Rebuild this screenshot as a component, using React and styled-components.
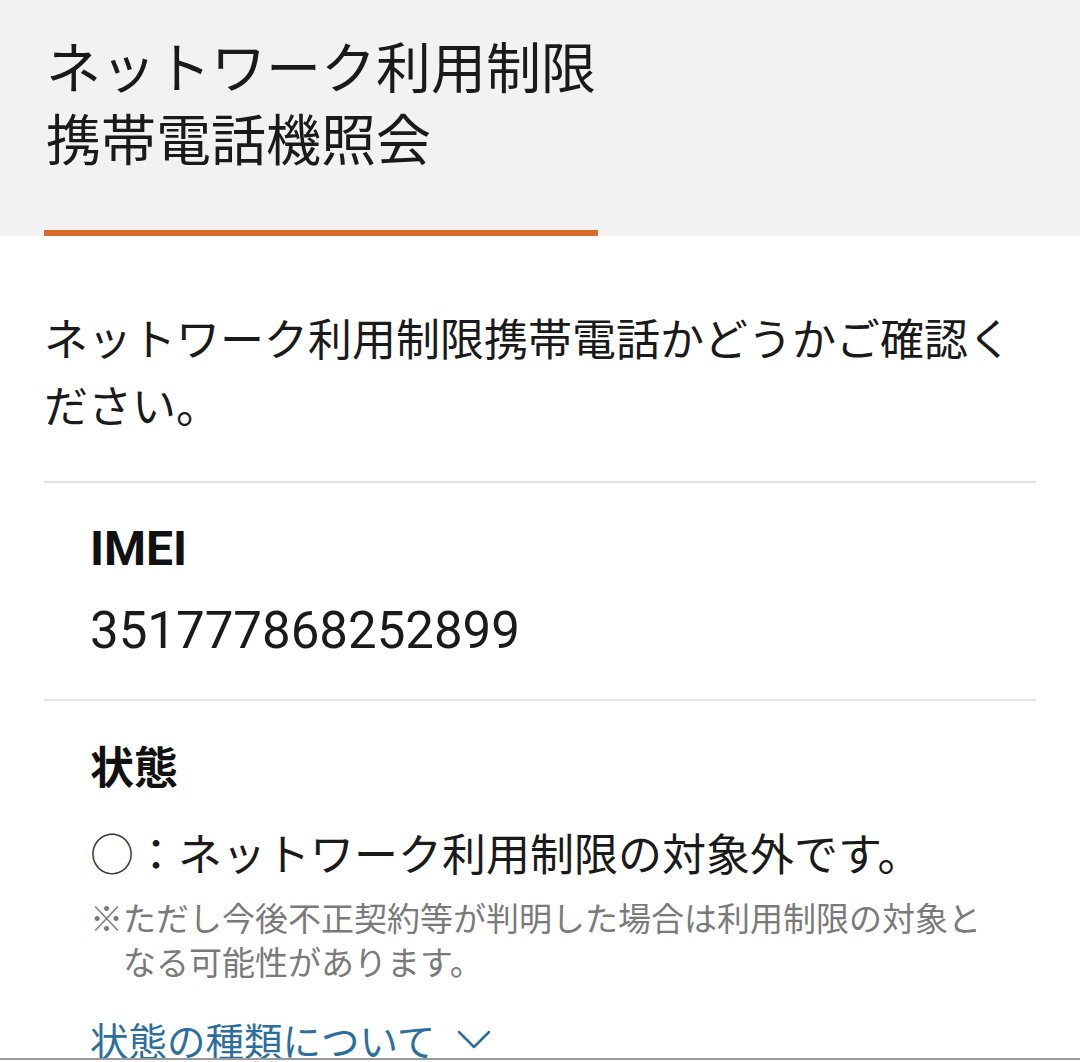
import React from "react";
import styled, { createGlobalStyle } from "styled-components";

const Global = createGlobalStyle`
  html, body { margin: 0; padding: 0; background: #ffffff; }
  body {
    font-family: Roboto, "Noto Sans CJK JP", sans-serif;
    color: #1a1a1a;
    overflow: hidden;
  }
`;

const Page = styled.div`
  width: 1080px;
  min-height: 1062px;
  background: #ffffff;
`;

const Header = styled.header`
  background: #f2f2f2;
  padding: 28px 44px 0;
`;

const Title = styled.h1`
  display: inline-block;
  margin: 0;
  padding: 0 2px 58px;
  font-family: "Noto Sans CJK JP", sans-serif;
  font-weight: 400;
  font-size: 55px;
  line-height: 72px;
  color: #1a1a1a;
  border-bottom: 6px solid #d8692f;
`;

const Body = styled.main`
  padding: 0 44px;
`;

const Lead = styled.p`
  margin: 68px 0 0;
  font-family: "Noto Sans CJK JP", sans-serif;
  font-size: 44px;
  line-height: 67px;
  padding-bottom: 43px;
  border-bottom: 2px solid #e3e3e3;
`;

const Section = styled.section`
  padding: ${(p) => p.$pad};
  border-bottom: ${(p) => (p.$divider ? "2px solid #e3e3e3" : "none")};
`;

const Label = styled.h2`
  margin: 0;
  font-family: Roboto, "Noto Sans CJK JP", sans-serif;
  font-weight: 700;
  font-size: ${(p) => p.$size || 48}px;
  line-height: 60px;
  color: #111;
`;

const Value = styled.div`
  margin-top: 22px;
  font-family: Roboto, "Noto Sans CJK JP", sans-serif;
  font-size: 51px;
  line-height: 60px;
  color: #1a1a1a;
`;

const Status = styled.div`
  margin-top: 23px;
  font-family: "Noto Sans CJK JP", sans-serif;
  font-size: 44px;
  line-height: 60px;
  color: #1a1a1a;
`;

const Mark = styled.span`
  display: inline-block;
  width: 44px;
  font-weight: 300;
  color: #333;
`;

const Note = styled.p`
  margin: 13px 0 0;
  padding-left: 33px;
  text-indent: -33px;
  font-family: "Noto Sans CJK JP", sans-serif;
  font-size: 33px;
  line-height: 44px;
  color: #7a7a7a;
`;

const LinkRow = styled.div`
  margin-top: 31px;
  display: flex;
  align-items: center;
  gap: 22px;
`;

const Link = styled.a`
  font-family: "Noto Sans CJK JP", sans-serif;
  font-size: 38.5px;
  line-height: 50px;
  color: #2d6f9c;
  text-decoration: underline;
  text-decoration-thickness: 3px;
  text-underline-offset: 6px;
`;

const Chevron = styled.svg`
  width: 34px;
  height: 22px;
  margin-top: 2px;
`;

const BottomEdge = styled.div`
  position: fixed;
  left: 0;
  right: 0;
  top: 1058px;
  height: 2px;
  background: #9a9a9a;
`;

export default function App() {
  return (
    <Page>
      <Global />
      <Header>
        <Title>
          ネットワーク利用制限
          <br />
          携帯電話機照会
        </Title>
      </Header>
      <Body>
        <Lead>ネットワーク利用制限携帯電話かどうかご確認ください。</Lead>
        <Section $pad="36px 46px 38px 46px" $divider>
          <Label>IMEI</Label>
          <Value>351777868252899</Value>
        </Section>
        <Section $pad="38px 46px 0 46px">
          <Label $size={44}>状態</Label>
          <Status>
            <Mark>○</Mark>：ネットワーク利用制限の対象外です。
          </Status>
          <Note>※ただし今後不正契約等が判明した場合は利用制限の対象となる可能性があります。</Note>
          <LinkRow>
            <Link href="#">状態の種類について</Link>
            <Chevron viewBox="0 0 34 22" fill="none">
              <path d="M2 3 L17 18 L32 3" stroke="#2d6f9c" strokeWidth="2.5" strokeLinecap="round" strokeLinejoin="round" />
            </Chevron>
          </LinkRow>
        </Section>
      </Body>
      <BottomEdge />
    </Page>
  );
}
